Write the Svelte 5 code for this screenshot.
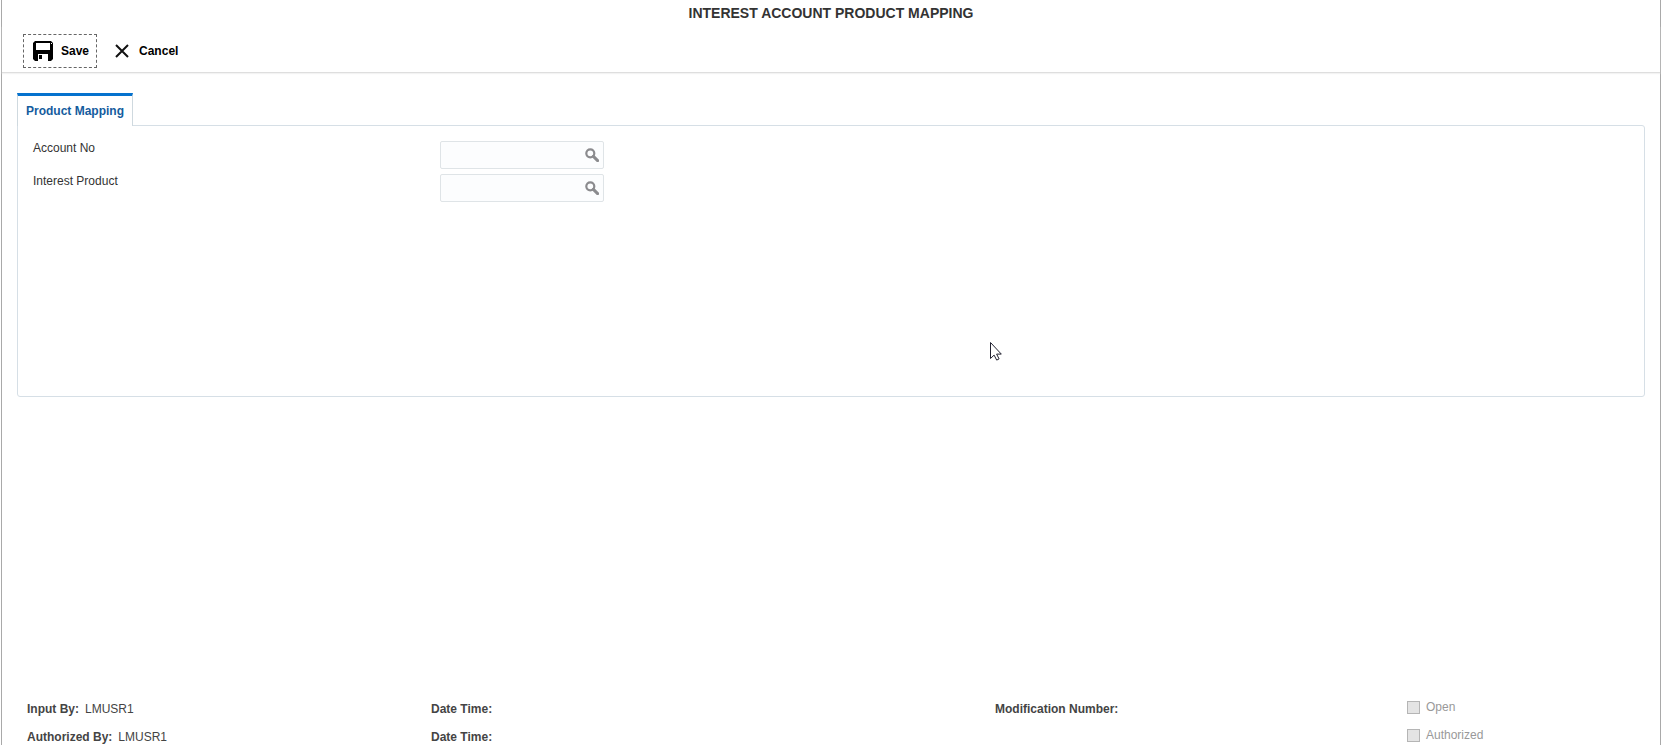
<script>
    let fields = [
        { id: 'accountNo', label: 'Account No', value: '' },
        { id: 'interestProduct', label: 'Interest Product', value: '' }
    ];

    let audit = [
        { by: 'Input By:', user: 'LMUSR1', date: 'Date Time:', mod: 'Modification Number:', flag: 'Open' },
        { by: 'Authorized By:', user: 'LMUSR1', date: 'Date Time:', mod: '', flag: 'Authorized' }
    ];
</script>

<div class="screen">
    <h1>INTEREST ACCOUNT PRODUCT MAPPING</h1>

    <div class="toolbar">
        <button class="action active" type="button">
            <svg width="20" height="20" viewBox="0 0 20 20" aria-hidden="true">
                <path fill="#000" fill-rule="evenodd" d="M2 0h16l2 2v16l-2 2h-3v-7H5v7H2l-2-2V2zM3 2v7h14V2z" />
                <path fill="#000" d="M6 14h3v4H6z" />
                <path fill="#fff" d="M18 2h1v1h-1z" />
            </svg>
            Save
        </button>
        <button class="action" type="button">
            <svg width="14" height="14" viewBox="0 0 14 14" aria-hidden="true">
                <path fill="none" stroke="#111" stroke-width="2" d="M1 1l12 12M13 1L1 13" />
            </svg>
            Cancel
        </button>
    </div>

    <main>
        <div class="tabs">
            <a class="tab" href="#mapping">Product Mapping</a>
        </div>
        <form class="panel" id="mapping">
            {#each fields as field}
                <div class="row">
                    <label for={field.id}>{field.label}</label>
                    <div class="lov">
                        <input id={field.id} type="text" bind:value={field.value} />
                        <button type="button" aria-label="Search {field.label}">
                            <svg width="14" height="14" viewBox="0 0 14 14" aria-hidden="true">
                                <circle cx="5.3" cy="5.3" r="4" fill="none" stroke="#8b8b8e" stroke-width="2.2" />
                                <path d="M8.4 8.4l4.2 4.2" stroke="#8b8b8e" stroke-width="3" stroke-linecap="round" />
                            </svg>
                        </button>
                    </div>
                </div>
            {/each}
        </form>
    </main>

    <footer>
        {#each audit as entry}
            <div><b>{entry.by}</b><span class="user">{entry.user}</span></div>
            <div><b>{entry.date}</b></div>
            <div><b>{entry.mod}</b></div>
            <label class="flag"><input type="checkbox" disabled />{entry.flag}</label>
        {/each}
    </footer>

    <svg class="pointer" width="13" height="20" viewBox="0 0 13 20" aria-hidden="true">
        <path fill="#fff" stroke="#222230" d="M1.5 1.5v16l3.6-3.4 2.6 5 2.4-1.2-2.5-4.8h4.7z" />
    </svg>
</div>

<style>
    :global(body){
        background-color: #fff;
    }

    .screen{
        position: relative;
        display: flex;
        flex-direction: column;
        box-sizing: border-box;
        min-height: 100vh;
        margin-left: 1px;
        border-left: 1px solid #a9a9a9;
        border-right: 1px solid #a9a9a9;
        font-family: "Liberation Sans", Arial, sans-serif;
        font-size: 12px;
        line-height: 16px;
        color: #333;
    }

    h1{
        margin: 0;
        padding: 5px 0;
        font-size: 14px;
        line-height: 16px;
        text-align: center;
    }

    .toolbar{
        display: flex;
        gap: 8px;
        padding: 8px 21px 4px;
        border-bottom: 1px solid #dedede;
        box-shadow: 0 1px 1px #f3f3f3;
    }

    .action{
        display: flex;
        align-items: center;
        gap: 8px;
        height: 34px;
        padding: 0 7px 0 9px;
        border: 1px dashed transparent;
        background: none;
        font: inherit;
        font-weight: bold;
        color: #000;
        cursor: pointer;
    }

    .action + .action{
        gap: 10px;
    }

    .active{
        border-color: #666;
    }

    main{
        padding: 20px 15px 0;
    }

    .tabs{
        display: flex;
    }

    .tab{
        position: relative;
        margin-bottom: -1px;
        padding: 7px 8px;
        border: 1px solid #cfd9df;
        border-top: 3px solid #0572ce;
        border-bottom: 0;
        background-color: #fff;
        font-weight: bold;
        color: #145c9e;
        text-decoration: none;
    }

    .panel{
        box-sizing: border-box;
        min-height: 272px;
        padding: 15px 0 0 15px;
        border: 1px solid #d6dfe6;
        border-radius: 0 3px 3px 3px;
    }

    .row{
        display: grid;
        grid-template-columns: calc(25% + 4px) 164px;
        margin-bottom: 5px;
        line-height: 14px;
    }

    .lov{
        display: flex;
        box-sizing: border-box;
        height: 28px;
        border: 1px solid #dfe4e7;
        border-radius: 2px;
        background-color: #fcfdfe;
    }

    .lov input{
        flex: 1;
        min-width: 0;
        padding: 0 6px;
        border: 0;
        background: none;
        font: inherit;
    }

    .lov button{
        display: flex;
        align-items: center;
        padding: 0 4px;
        border: 0;
        background: none;
        cursor: pointer;
    }

    footer{
        display: grid;
        grid-template-columns: 404fr 564fr 412fr 253fr;
        row-gap: 12px;
        margin-top: auto;
        padding-left: 25px;
        color: #444;
    }

    .user{
        margin-left: 6px;
    }

    .flag{
        display: flex;
        align-items: center;
        gap: 6px;
        margin-top: -4px;
        color: #999;
    }

    .flag input{
        appearance: none;
        width: 13px;
        height: 13px;
        margin: 0;
        border: 1px solid #b5b5b5;
        background-color: #e4e4e4;
    }

    .pointer{
        position: absolute;
        top: 341px;
        left: 59.5%;
    }
</style>
